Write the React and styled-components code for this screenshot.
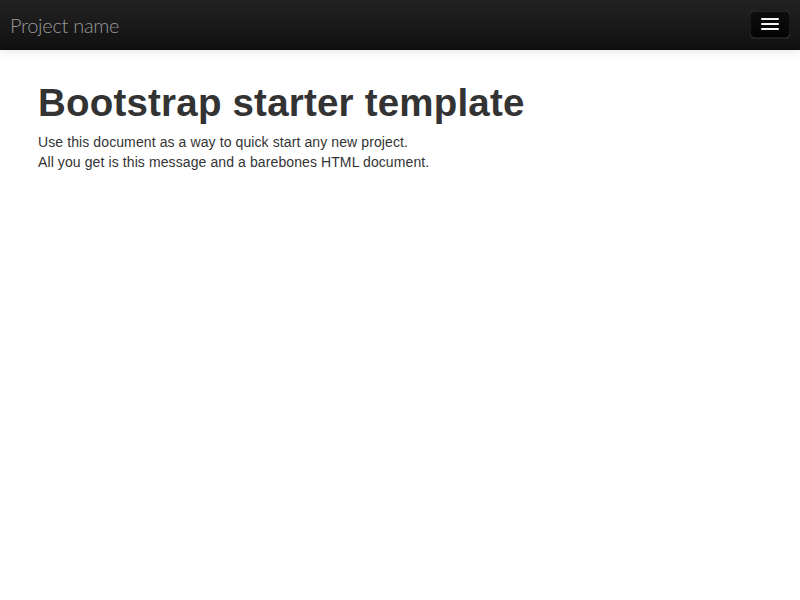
import React from "react";
import styled, { createGlobalStyle } from "styled-components";

const Global = createGlobalStyle`
  html, body { margin: 0; padding: 0; background: #fff; }
  body {
    font-family: "Liberation Sans", Arial, sans-serif;
    font-size: 14px;
    line-height: 20px;
    color: #333;
  }
`;

const Navbar = styled.header`
  height: 50px;
  box-sizing: border-box;
  display: flex;
  align-items: flex-start;
  justify-content: space-between;
  padding: 0 10px;
  background-image: linear-gradient(to bottom, #222222, #111111);
  border-bottom: 1px solid #0c0c0c;
  box-shadow: 0 1px 10px rgba(0, 0, 0, 0.1);
  position: relative;
  z-index: 1;
`;

const Brand = styled.a`
  font-family: Lato, "Liberation Sans", Arial, sans-serif;
  font-size: 20px;
  font-weight: 300;
  line-height: 20px;
  letter-spacing: -0.3px;
  color: #999;
  text-decoration: none;
  padding-top: 15px;
`;

const ToggleButton = styled.button`
  width: 40px;
  height: 28px;
  box-sizing: border-box;
  margin-top: 10px;
  padding: 7px 10px;
  display: flex;
  flex-direction: column;
  gap: 3px;
  border: 1px solid #1a1a1a;
  border-radius: 4px;
  background-image: linear-gradient(to bottom, #0e0e0e, #040404);
  box-shadow: inset 0 1px 0 rgba(255, 255, 255, 0.1), 0 1px 0 rgba(255, 255, 255, 0.075);
  cursor: pointer;
`;

const IconBar = styled.span`
  display: block;
  width: 18px;
  height: 2px;
  border-radius: 1px;
  background: #f5f5f5;
  box-shadow: 0 1px 0 rgba(0, 0, 0, 0.25);
`;

const Main = styled.main`
  padding: 33px 38px 0;
`;

const Title = styled.h1`
  margin: 0 0 9px;
  font-family: "Liberation Sans", Arial, sans-serif;
  font-size: 38.5px;
  line-height: 40px;
  font-weight: bold;
  letter-spacing: 0.2px;
  color: #333;
`;

const Lead = styled.p`
  margin: 0;
  font-size: 14px;
  line-height: 20px;
  letter-spacing: 0.1px;
  color: #333;
`;

export default function App() {
  return (
    <>
      <Global />
      <Navbar>
        <Brand href="#">Project name</Brand>
        <ToggleButton aria-label="Toggle navigation">
          <IconBar />
          <IconBar />
          <IconBar />
        </ToggleButton>
      </Navbar>
      <Main>
        <Title>Bootstrap starter template</Title>
        <Lead>
          Use this document as a way to quick start any new project.
          <br />
          All you get is this message and a barebones HTML document.
        </Lead>
      </Main>
    </>
  );
}
